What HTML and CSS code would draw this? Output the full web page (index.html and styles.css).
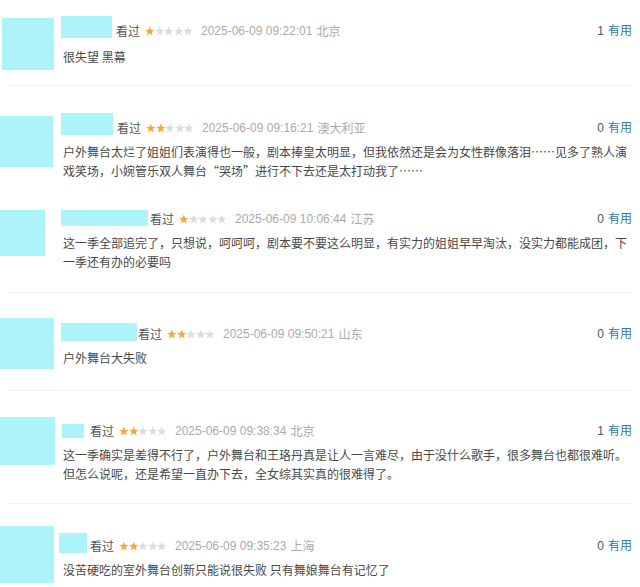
FILE: index.html
```html
<!DOCTYPE html>
<html lang="zh-CN">
<head>
    <meta charset="UTF-8">
    <meta name="viewport" content="width=device-width, initial-scale=1.0">
    <title>短评</title>
    <link rel="stylesheet" href="styles.css">
</head>
<body>
    <svg class="defs" aria-hidden="true">
        <symbol id="star" viewBox="0 0 10 10">
            <polygon points="5,0.4 6.3,3.7 9.8,3.9 7.1,6.1 8,9.6 5,7.6 2,9.6 2.9,6.1 0.2,3.9 3.7,3.7"/>
        </symbol>
    </svg>

    <div class="comments">
        <!-- 1 -->
        <div class="comment c1">
            <div class="avatar-col"><div class="avatar"></div></div>
            <div class="comment-body">
                <div class="meta">
                    <span class="mask"></span>
                    <span class="status">看过</span>
                    <span class="stars">
                        <svg class="on"><use href="#star"/></svg><svg><use href="#star"/></svg><svg><use href="#star"/></svg><svg><use href="#star"/></svg><svg><use href="#star"/></svg>
                    </span>
                    <span class="time">2025-06-09 09:22:01</span>
                    <span class="loc">北京</span>
                    <span class="votes"><b>1</b><a href="#">有用</a></span>
                </div>
                <p class="text">很失望 黑幕</p>
            </div>
        </div>
        <div class="divider"></div>

        <!-- 2 -->
        <div class="comment c2">
            <div class="avatar-col"><div class="avatar"></div></div>
            <div class="comment-body">
                <div class="meta">
                    <span class="mask"></span>
                    <span class="status">看过</span>
                    <span class="stars">
                        <svg class="on"><use href="#star"/></svg><svg class="on"><use href="#star"/></svg><svg><use href="#star"/></svg><svg><use href="#star"/></svg><svg><use href="#star"/></svg>
                    </span>
                    <span class="time">2025-06-09 09:16:21</span>
                    <span class="loc">澳大利亚</span>
                    <span class="votes"><b>0</b><a href="#">有用</a></span>
                </div>
                <p class="text">户外舞台太烂了姐姐们表演得也一般，剧本捧皇太明显，但我依然还是会为女性群像落泪……见多了熟人演戏笑场，小婉管乐双人舞台“哭场”进行不下去还是太打动我了……</p>
            </div>
        </div>

        <!-- 3 -->
        <div class="comment c3">
            <div class="avatar-col"><div class="avatar"></div></div>
            <div class="comment-body">
                <div class="meta">
                    <span class="mask"></span>
                    <span class="status">看过</span>
                    <span class="stars">
                        <svg class="on"><use href="#star"/></svg><svg><use href="#star"/></svg><svg><use href="#star"/></svg><svg><use href="#star"/></svg><svg><use href="#star"/></svg>
                    </span>
                    <span class="time">2025-06-09 10:06:44</span>
                    <span class="loc">江苏</span>
                    <span class="votes"><b>0</b><a href="#">有用</a></span>
                </div>
                <p class="text">这一季全部追完了，只想说，呵呵呵，剧本要不要这么明显，有实力的姐姐早早淘汰，没实力都能成团，下一季还有办的必要吗</p>
            </div>
        </div>
        <div class="divider"></div>

        <!-- 4 -->
        <div class="comment c4">
            <div class="avatar-col"><div class="avatar"></div></div>
            <div class="comment-body">
                <div class="meta">
                    <span class="mask"></span>
                    <span class="status">看过</span>
                    <span class="stars">
                        <svg class="on"><use href="#star"/></svg><svg class="on"><use href="#star"/></svg><svg><use href="#star"/></svg><svg><use href="#star"/></svg><svg><use href="#star"/></svg>
                    </span>
                    <span class="time">2025-06-09 09:50:21</span>
                    <span class="loc">山东</span>
                    <span class="votes"><b>0</b><a href="#">有用</a></span>
                </div>
                <p class="text">户外舞台大失败</p>
            </div>
        </div>
        <div class="divider"></div>

        <!-- 5 -->
        <div class="comment c5">
            <div class="avatar-col"><div class="avatar"></div></div>
            <div class="comment-body">
                <div class="meta">
                    <span class="mask"></span>
                    <span class="status">看过</span>
                    <span class="stars">
                        <svg class="on"><use href="#star"/></svg><svg class="on"><use href="#star"/></svg><svg><use href="#star"/></svg><svg><use href="#star"/></svg><svg><use href="#star"/></svg>
                    </span>
                    <span class="time">2025-06-09 09:38:34</span>
                    <span class="loc">北京</span>
                    <span class="votes"><b>1</b><a href="#">有用</a></span>
                </div>
                <p class="text">这一季确实是差得不行了，户外舞台和王珞丹真是让人一言难尽，由于没什么歌手，很多舞台也都很难听。但怎么说呢，还是希望一直办下去，全女综其实真的很难得了。</p>
            </div>
        </div>
        <div class="divider"></div>

        <!-- 6 -->
        <div class="comment c6">
            <div class="avatar-col"><div class="avatar"></div></div>
            <div class="comment-body">
                <div class="meta">
                    <span class="mask"></span>
                    <span class="status">看过</span>
                    <span class="stars">
                        <svg class="on"><use href="#star"/></svg><svg class="on"><use href="#star"/></svg><svg><use href="#star"/></svg><svg><use href="#star"/></svg><svg><use href="#star"/></svg>
                    </span>
                    <span class="time">2025-06-09 09:35:23</span>
                    <span class="loc">上海</span>
                    <span class="votes"><b>0</b><a href="#">有用</a></span>
                </div>
                <p class="text">没苦硬吃的室外舞台创新只能说很失败 只有舞娘舞台有记忆了</p>
            </div>
        </div>
    </div>
</body>
</html>
```

FILE: styles.css
```css
* {
    margin: 0;
    padding: 0;
    box-sizing: border-box;
}

body {
    font-family: "Noto Sans CJK SC", sans-serif;
    font-size: 12px;
    color: #494949;
    background: #fff;
    width: 640px;
    height: 587px;
    overflow: hidden;
}

.defs {
    position: absolute;
    width: 0;
    height: 0;
}

.comments {
    width: 640px;
}

.comment {
    display: flex;
    align-items: flex-start;
}

.avatar-col {
    width: 61px;
    flex: none;
}

.avatar {
    background: #acf4fa;
    width: 54px;
    height: 52px;
}

.comment-body {
    flex: 1;
    padding-right: 8px;
}

.meta {
    display: flex;
    align-items: flex-end;
    line-height: 14px;
    white-space: nowrap;
}

.mask {
    display: block;
    background: #acf4fa;
    height: 22px;
}

.status {
    color: #555;
    margin-left: 4px;
}

.stars {
    display: flex;
    margin: 0 0 2px 5px;
}

.stars svg {
    width: 9.6px;
    height: 10px;
    fill: #dcdcdc;
}

.stars svg.on {
    fill: #f4a93a;
}

.time {
    font-family: "Liberation Sans", sans-serif;
    color: #aaa;
    margin-left: 8px;
}

.loc {
    color: #aaa;
    margin-left: 4px;
}

.votes {
    margin-left: auto;
    color: #555;
}

.votes b {
    font-family: "Liberation Sans", sans-serif;
    font-weight: normal;
    margin-right: 4px;
}

.votes a {
    color: #37a;
    text-decoration: none;
}

.text {
    margin-top: 7px;
    padding-left: 2px;
    line-height: 19px;
    color: #494949;
}

.divider {
    height: 1px;
    margin: 0 8px;
    background: #efefef;
}

/* each row was cut from a different screenshot, so the sizes differ a little */
.c1 { padding: 16px 0 15px; }
.c1 .avatar { margin: 2px 0 0 2px; width: 52px; }
.c1 .mask { width: 51px; }
.c1 .text { margin-top: 9px; }

.c2 { padding: 27px 0 15px; }
.c2 .avatar { margin-top: 3px; width: 53px; height: 51px; }
.c2 .mask { width: 52px; }

.c3 { padding: 15px 0 21px; }
.c3 .avatar { width: 45px; height: 46px; }
.c3 .mask { width: 87px; height: 16px; }
.c3 .status { margin-left: 2px; }

.c4 { padding: 25px 0 21px; }
.c4 .comment-body { margin-top: 5px; }
.c4 .avatar { height: 51px; }
.c4 .mask { width: 76px; height: 18px; }
.c4 .status { margin-left: 1px; }

.c5 { padding: 26px 0 20px; }
.c5 .comment-body { margin-top: 6px; }
.c5 .avatar { width: 55px; height: 48px; }
.c5 .mask { width: 22px; height: 14px; margin-left: 1px; }
.c5 .status { margin-left: 6px; }

.c6 { padding: 22px 0 0; }
.c6 .comment-body { margin-top: 7px; }
.c6 .avatar { height: 57px; }
.c6 .mask { width: 28px; height: 20px; margin-left: -2px; }
.c6 .status { margin-left: 3px; }
```
